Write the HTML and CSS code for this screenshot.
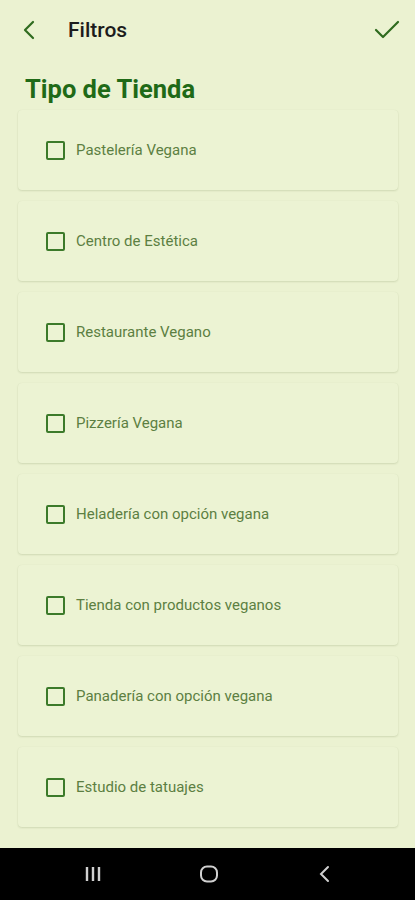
FILE: index.html
```html
<!DOCTYPE html>
<html lang="es">
<head>
    <meta charset="UTF-8">
    <meta name="viewport" content="width=device-width, initial-scale=1.0">
    <title>Filtros</title>
    <link rel="stylesheet" href="styles.css">
</head>
<body>
    <div id="app">
        <header class="toolbar">
            <button class="icon-btn" aria-label="Volver">
                <svg width="24" height="24" viewBox="0 0 24 24"><path d="M15 4 L7 12 L15 20" fill="none" stroke="#2f6b1f" stroke-width="2.2" stroke-linecap="round" stroke-linejoin="round"/></svg>
            </button>
            <h1 class="title">Filtros</h1>
            <button class="icon-btn check" aria-label="Aplicar">
                <svg width="28" height="24" viewBox="0 0 28 24"><path d="M3 12 L10 19 L25 4" fill="none" stroke="#2f6b1f" stroke-width="2.2" stroke-linecap="round" stroke-linejoin="round"/></svg>
            </button>
        </header>

        <main class="content">
            <h2 class="section">Tipo de Tienda</h2>
            <ul class="list">
                <li class="card"><label><span class="box"></span>Pastelería Vegana</label></li>
                <li class="card"><label><span class="box"></span>Centro de Estética</label></li>
                <li class="card"><label><span class="box"></span>Restaurante Vegano</label></li>
                <li class="card"><label><span class="box"></span>Pizzería Vegana</label></li>
                <li class="card"><label><span class="box"></span>Heladería con opción vegana</label></li>
                <li class="card"><label><span class="box"></span>Tienda con productos veganos</label></li>
                <li class="card"><label><span class="box"></span>Panadería con opción vegana</label></li>
                <li class="card"><label><span class="box"></span>Estudio de tatuajes</label></li>
            </ul>
        </main>

        <nav class="navbar">
            <svg width="20" height="20" viewBox="0 0 20 20"><path d="M4 3v14M10 3v14M16 3v14" stroke="#d0d0d0" stroke-width="2.4"/></svg>
            <svg width="22" height="22" viewBox="0 0 22 22"><rect x="3" y="3.5" width="16" height="15" rx="6" fill="none" stroke="#d0d0d0" stroke-width="2"/></svg>
            <svg width="20" height="20" viewBox="0 0 20 20"><path d="M13 3 L6 10 L13 17" fill="none" stroke="#d0d0d0" stroke-width="2" stroke-linecap="round"/></svg>
        </nav>
    </div>
</body>
</html>
```

FILE: styles.css
```css
* {
    box-sizing: border-box;
}

body {
    margin: 0;
    background-color: #ebf2d1;
    font-family: Roboto, "Liberation Sans", sans-serif;
}

#app {
    height: 900px;
    display: flex;
    flex-direction: column;
}

.toolbar {
    height: 60px;
    display: flex;
    align-items: center;
    padding: 0 14px 0 18px;
}

.icon-btn {
    background: none;
    border: none;
    padding: 0;
    display: flex;
}

.title {
    flex: 1;
    margin: 0 0 0 26px;
    font-size: 21px;
    font-weight: 500;
    color: #1c1c1c;
}

.content {
    flex: 1;
    overflow: hidden;
}

.section {
    margin: 14px 0 6px 25px;
    font-size: 25.5px;
    font-weight: 700;
    color: #1f6a17;
}

.list {
    list-style: none;
    margin: 0;
    padding: 0 17px 0 18px;
    display: flex;
    flex-direction: column;
    gap: 11px;
}

.card {
    height: 80px;
    border-radius: 4px;
    background-color: #ecf3d3;
    box-shadow: 0 1px 2px rgba(60, 80, 20, 0.14), 0 0 1px rgba(60, 80, 20, 0.08);
    display: flex;
    align-items: center;
    padding-left: 28px;
}

.card label {
    display: flex;
    align-items: center;
    gap: 11px;
    font-size: 15px;
    color: #5c7f42;
}

.box {
    width: 19px;
    height: 19px;
    border: 2px solid #3c7a2a;
    border-radius: 2px;
}

.navbar {
    height: 52px;
    background-color: #000;
    display: flex;
    align-items: center;
    justify-content: space-between;
    padding: 0 80px 0 83px;
}
```
